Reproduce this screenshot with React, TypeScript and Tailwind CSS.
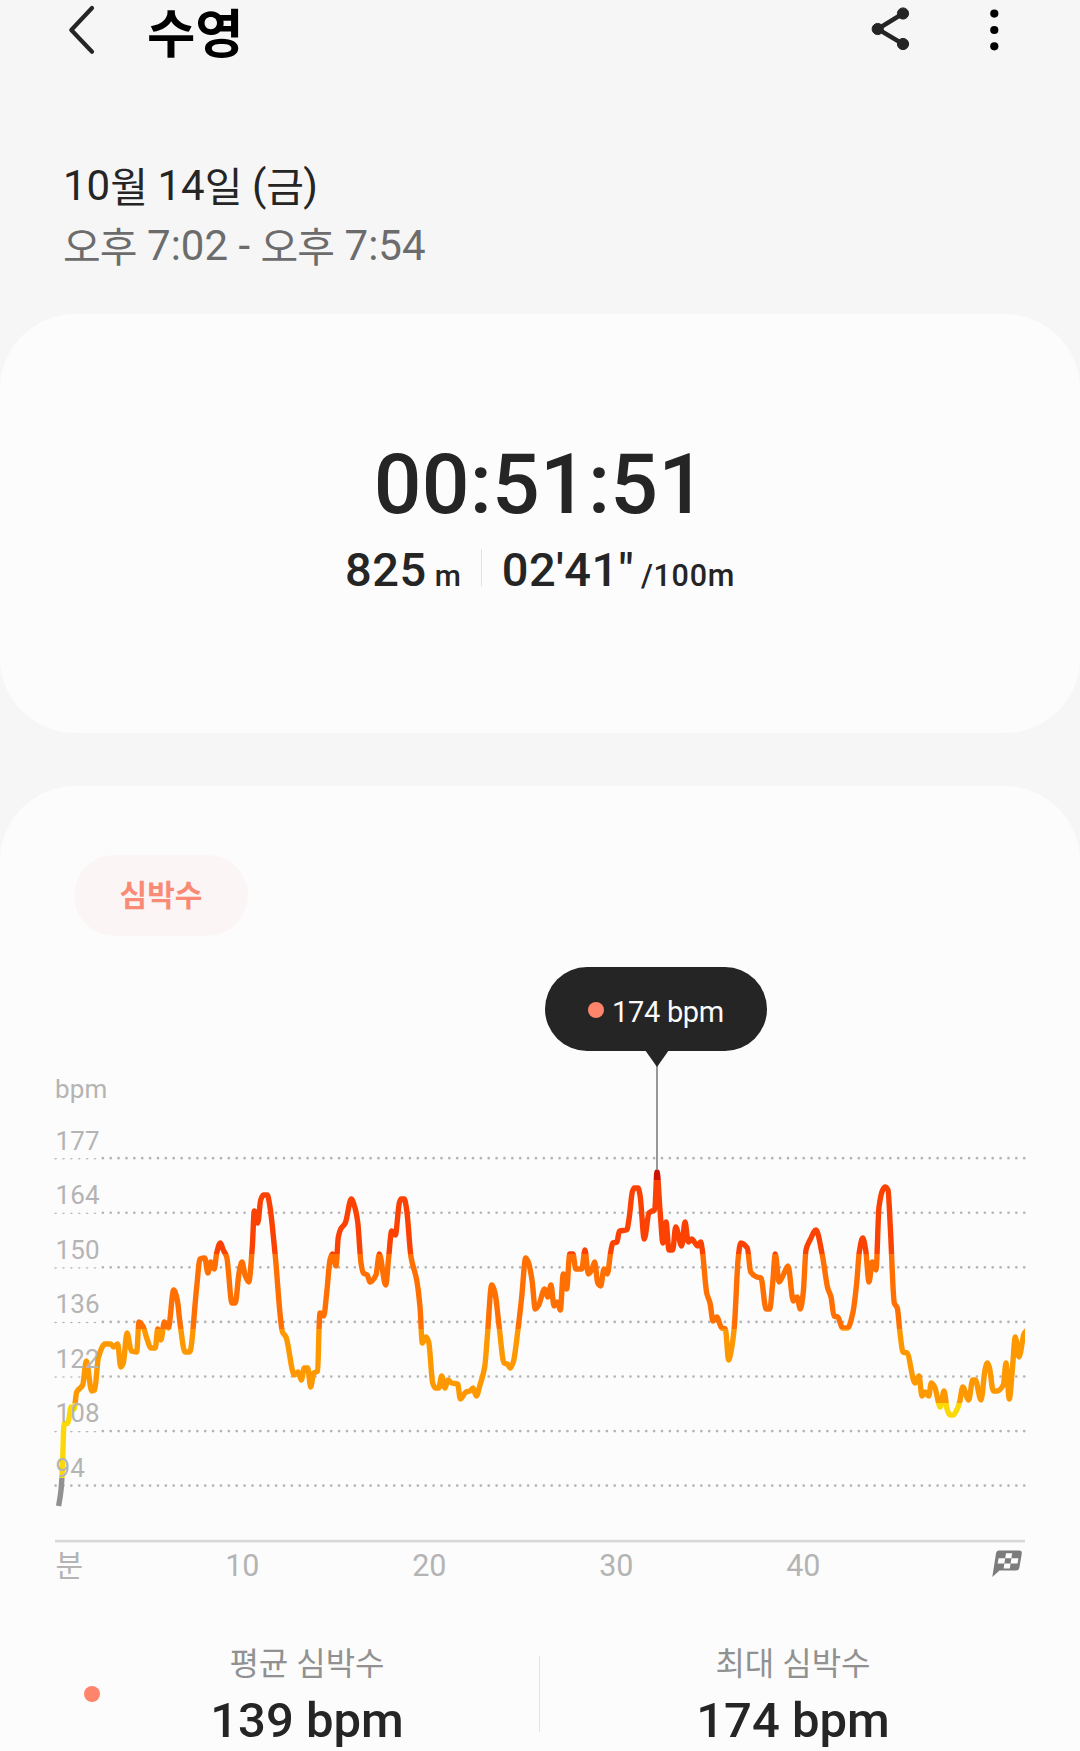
import React from 'react';

interface Zone {
  color: string;
  top: number;
  bottom: number;
}

interface StatProps {
  label: string;
  value: string;
}

const FONT = "font-[Roboto,'Noto_Sans_CJK_KR',sans-serif]";

// [x, y] samples of the heart rate line, y = 0 sits 18px above the 177 bpm grid line
const SAMPLES: [number, number][] = [
  [58.6, 366], [60.8, 352], [61.9, 338], [62.7, 320], [64, 284], [68, 283], [71, 267], [74, 269], [76.7, 252], [82.7, 245],
  [86.3, 221], [91.7, 251], [94.7, 250], [98.3, 218], [105, 204], [110.7, 204], [113.7, 207], [117.7, 204],
  [120.7, 227], [123.3, 223], [127, 193], [131.3, 211], [136.7, 212], [139, 182], [143.3, 187], [146.7, 198],
  [151, 208], [155.3, 208], [157.7, 189], [161, 200], [164.3, 182], [168.3, 188], [173.7, 150], [177.3, 160],
  [180, 183], [185, 212], [189.7, 212], [196.7, 147], [200, 119], [204.7, 118], [208, 133], [210.7, 122],
  [214.3, 129], [216.7, 113], [220.3, 103], [223.3, 110], [226.7, 117], [232, 163], [235.3, 163], [239, 133],
  [242, 122], [245, 135], [248.7, 142], [252.3, 107], [254.3, 71], [257.7, 83], [260.7, 60], [263.3, 55],
  [267.3, 55], [270, 67], [275, 113], [282.5, 192], [286, 197], [294.3, 235], [298.3, 232], [301.3, 240],
  [304.3, 228], [307.7, 228], [310.7, 247], [313.7, 233], [317.7, 231], [319, 190], [320, 173], [323.7, 176],
  [326.7, 153], [330, 120], [332.3, 114], [336, 126], [338.3, 97], [340.7, 89], [345.3, 83], [351.3, 59],
  [355, 68], [357.7, 82], [361, 123], [363.3, 133], [367.3, 135], [370, 142], [376, 135], [379.3, 114],
  [385.7, 145], [388.7, 117], [391.7, 91], [395.3, 95], [399.3, 63], [401, 59], [404.3, 59], [406.7, 70],
  [411, 117], [416.7, 140], [420, 167], [422.3, 203], [426, 197], [428.7, 202], [432.7, 243], [435.3, 248],
  [438.7, 248], [441.7, 236], [445, 248], [448, 240], [451.7, 243], [457.7, 244], [460.3, 259], [466, 252],
  [470, 251], [473, 248], [476.3, 256], [480, 245], [484.7, 227], [487.3, 197], [491.7, 145], [495, 153],
  [499.3, 188], [504, 223], [507.3, 224], [510.3, 228], [513.3, 222], [518.3, 187], [521.7, 157], [525.7, 118],
  [528.3, 122], [532, 140], [535.3, 169], [538.7, 165], [544.7, 149], [547.7, 157], [551, 145], [554, 166],
  [557.3, 162], [560.3, 170], [563.3, 134], [566.7, 149], [569.7, 114], [573, 114], [575.7, 129], [581.7, 129],
  [585, 110], [588.3, 134], [591.7, 130], [594.7, 122], [597.7, 143], [600.7, 146], [604, 129], [607.3, 134],
  [610.7, 112], [612.7, 103], [617, 102], [619.3, 91], [626.7, 90], [629.3, 77], [632.3, 52], [634.3, 48],
  [638, 48], [640, 55], [644.3, 99], [649, 73], [652, 71], [654.7, 70], [657, 32], [660, 70], [663, 103],
  [666, 82], [669, 110], [672.7, 110], [675.7, 87], [681.7, 106], [685, 82], [688.3, 102], [691.7, 99],
  [697.7, 106], [700.7, 102], [702.3, 110], [706.7, 153], [710, 163], [713, 181], [716.7, 177], [721.7, 188],
  [725.3, 189], [728.7, 220], [731.3, 210], [734.3, 187], [738.3, 117], [740.7, 103], [747.3, 108], [750.7, 132],
  [756.7, 137], [761, 138], [766, 169], [769.7, 169], [772.7, 143], [775.3, 114], [779, 142], [783.3, 135],
  [788, 126], [793.3, 161], [797, 157], [800.3, 169], [803.3, 152], [806, 110], [810, 100], [816, 90],
  [822.3, 115], [827.7, 148], [831, 157], [834, 176], [837.7, 177], [842.7, 188], [847.7, 188], [853, 172],
  [856.7, 143], [859.3, 112], [862.7, 98], [865.7, 110], [869, 142], [872.3, 122], [876, 130], [879, 67],
  [882.7, 50], [885, 47], [888, 50], [890.3, 87], [894.3, 163], [897.3, 168], [900, 193], [903, 212],
  [907, 213], [915, 243], [919, 236], [922, 256], [925, 252], [928.7, 256], [931.3, 243], [934.7, 247],
  [940.3, 267], [944, 251], [947.3, 270], [950, 275], [953.3, 275], [956.7, 270], [959.7, 262], [962.7, 247],
  [968.7, 260], [972.7, 240], [975.3, 240], [981, 260], [985, 230], [987.3, 223], [989.3, 227], [993.3, 251],
  [997.3, 251], [1003.3, 245], [1006, 223], [1009.3, 259], [1012.3, 230], [1015.3, 197], [1019, 217], [1024, 194],
  [1027, 190],
];

const ZONES: Zone[] = [
  { color: '#cc1205', top: 0, bottom: 39.7 },
  { color: '#fc4203', top: 39.7, bottom: 114 },
  { color: '#ff6f02', top: 114, bottom: 189 },
  { color: '#fe9800', top: 189, bottom: 263.3 },
  { color: '#fcd808', top: 263.3, bottom: 338 },
  { color: '#919191', top: 338, bottom: 400 },
];

const Y_LABELS = [177, 164, 150, 136, 122, 108, 94];
const X_LABELS = [10, 20, 30, 40];
const gridY = (i: number) => 18.2 + i * 54.57;

// monotone cubic curve, so peaks never overshoot their sample
function buildPath(points: [number, number][]) {
  const slopes = points.slice(1).map(([x, y], i) => (y - points[i][1]) / (x - points[i][0]));
  const tangents = points.map((_, i) => {
    if (i === 0) return slopes[0];
    if (i === points.length - 1) return slopes[i - 1];
    const a = slopes[i - 1];
    const b = slopes[i];
    return a * b <= 0 ? 0 : (2 * a * b) / (a + b);
  });

  return points.reduce((d, [x, y], i) => {
    if (i === 0) return `M${x} ${y}`;
    const [px, py] = points[i - 1];
    const third = (x - px) / 3;
    return `${d}C${px + third} ${py + tangents[i - 1] * third} ${x - third} ${y - tangents[i] * third} ${x} ${y}`;
  }, '');
}

function Header() {
  return (
    <header className="flex h-[58px] items-center pl-[66px] pr-[78px]">
      <svg className="h-[58px] w-[30px]" viewBox="0 0 30 58" fill="none" stroke="#252525" strokeWidth="4.2" strokeLinecap="round" strokeLinejoin="round">
        <path d="M26 8 5.3 30 26 51.7" />
      </svg>
      <h1 className="mt-[12px] ml-[51px] text-[52.5px] leading-[58px] font-bold text-black">수영</h1>
      <svg className="ml-auto h-[58px] w-[40px]" viewBox="0 0 40 58" fill="#252525" stroke="#252525">
        <path d="M33 13.5 7.7 29 33 44" fill="none" strokeWidth="4.4" />
        <circle cx="33" cy="13.5" r="5.6" />
        <circle cx="7.7" cy="29" r="5.6" />
        <circle cx="33" cy="44" r="5.6" />
      </svg>
      <svg className="ml-[76px] h-[58px] w-[16px]" viewBox="0 0 16 58" fill="#000">
        <circle cx="8.3" cy="13.6" r="4.1" />
        <circle cx="8.3" cy="30" r="4.1" />
        <circle cx="8.3" cy="46.3" r="4.1" />
      </svg>
    </header>
  );
}

// Hangul sits slightly lower and tighter than the digits around it
function Hangul({ children }: { children: React.ReactNode }) {
  return <span className="align-[-1.5px] text-[41px] leading-none tracking-[-0.9px]">{children}</span>;
}

function DateRange() {
  return (
    <div className="h-[256px] pt-[98px] pl-[63px] text-[42px] leading-[60px]">
      <div className="text-[#252525]">
        10<Hangul>월</Hangul> 14<Hangul>일</Hangul> (<Hangul>금</Hangul>)
      </div>
      <div className="text-[#6c6c6c]">
        <Hangul>오후</Hangul> 7:02 - <Hangul>오후</Hangul> 7:54
      </div>
    </div>
  );
}

function SummaryCard() {
  return (
    <section className="flex h-[419px] flex-col items-center rounded-[75px] bg-[#fcfcfc] pt-[127px] font-medium text-[#252525]">
      <div className="text-[84px] leading-[88px] tracking-[0.2px]">00:51:51</div>
      <div className="mt-[11px] flex h-[60px] items-baseline">
        <span className="text-[47px] leading-[60px] tracking-[0.5px]">825</span>
        <span className="ml-[8px] text-[30px]">m</span>
        <span className="mt-[-5px] ml-[20px] h-[37px] w-px self-center bg-[#e2e2e2]" />
        <span className="ml-[20px] text-[47px] leading-[60px] tracking-[0.4px]">02'41"</span>
        <span className="ml-[7px] text-[30.5px] tracking-[0.7px]">/100m</span>
      </div>
    </section>
  );
}

function HeartRateChart() {
  return (
    <div className="relative mt-[24px] h-[660px]">
      <svg className="block h-[660px] w-full" viewBox="0 -180 1080 660">
        <defs>
          <linearGradient id="zones" gradientUnits="userSpaceOnUse" x1="0" y1="0" x2="0" y2="400">
            {ZONES.map(zone => (
              <React.Fragment key={zone.color}>
                <stop offset={zone.top / 400} stopColor={zone.color} />
                <stop offset={zone.bottom / 400} stopColor={zone.color} />
              </React.Fragment>
            ))}
          </linearGradient>
          <clipPath id="plot">
            <rect x="55" y="0" width="970" height="400" />
          </clipPath>
        </defs>

        {Y_LABELS.map((label, i) => (
          <g key={label}>
            <line x1="55.6" x2="1025" y1={gridY(i)} y2={gridY(i)} stroke="#b4b4b4" strokeWidth="2.7" strokeLinecap="round" strokeDasharray="0 7.875" />
            {label > 100 && <rect x="53" y={gridY(i) - 10} width="45" height="10" fill="#fcfcfc" />}
          </g>
        ))}

        <path d={buildPath(SAMPLES)} clipPath="url(#plot)" fill="none" stroke="url(#zones)" strokeWidth="5.4" strokeLinejoin="round" />

        <g fill="#b4b4b4" fontSize="26">
          <text x="55" y="-42" letterSpacing="0.2">bpm</text>
          {Y_LABELS.map((label, i) => (
            <text key={label} x="55.4" y={gridY(i) - 8.7} letterSpacing="0.2">{label}</text>
          ))}
        </g>

        <rect x="55" y="399.8" width="970" height="2.6" fill="#d8d8d8" />
        <g fill="#b4b4b4" fontSize="30.5" textAnchor="middle">
          <text x="69.4" y="436" fontSize="30">분</text>
          {X_LABELS.map((label, i) => (
            <text key={label} x={242.3 + i * 187} y="436">{label}</text>
          ))}
        </g>

        <g transform="translate(992 410.6)">
          <path d="M7 0H27Q30.2 0 29.8 3L27.3 17.4Q26.8 20 24 20H7.5L0.3 26.4 4 3Q4.5 0 7 0Z" fill="#7c7c7c" />
          <path d="M14 2.6H20.2L19.4 7.6H13.2ZM6.6 7.6H13.2L12.4 12.8H5.6ZM19.4 7.6H26.4L25.6 12.8H18.6ZM12.4 12.8H18.6L17.8 17.8H11.6Z" fill="#fcfcfc" />
        </g>

        <line x1="657" x2="657" y1="-75" y2="30" stroke="#8c8c8c" strokeWidth="1.8" />
      </svg>

      <div className="absolute top-[7px] left-[545px] flex h-[84px] w-[222px] items-center rounded-full bg-[#252525] pl-[43px]">
        <span className="mt-[2px] size-4 rounded-full bg-[#ff846c]" />
        <span className="ml-[8px] mt-[6px] text-[29px] leading-9 tracking-[-0.3px] text-[#fafafa]">174 bpm</span>
        <svg className="absolute top-[83px] left-[100px] h-[17px] w-[24px]" viewBox="0 0 24 17" fill="#252525">
          <path d="M0 0H24L12 17Z" />
        </svg>
      </div>
    </div>
  );
}

function Stat({ label, value }: StatProps) {
  return (
    <div className="flex w-[240px] flex-col items-center">
      <div className="text-[32px] leading-[48px] text-[#919191]">{label}</div>
      <div className="mt-[5px] text-[49px] leading-[56px] font-medium whitespace-nowrap text-[#252525]">{value}</div>
    </div>
  );
}

function HeartRateCard() {
  return (
    <section className="mt-[53px] h-[965px] rounded-t-[75px] bg-[#fcfcfc] pt-[69px]">
      <div className="ml-[74px] flex h-[81px] w-[174px] items-center justify-center rounded-full bg-[#fcf5f5] text-[30px] font-bold text-[#f98b76]">
        심박수
      </div>
      <HeartRateChart />
      <div className="mt-[20px] flex pl-[84px]">
        <span className="mt-[46px] size-4 rounded-full bg-[#ff846c]" />
        <div className="ml-[87px]">
          <Stat label="평균 심박수" value="139 bpm" />
        </div>
        <span className="mt-[16px] ml-[112px] h-[76px] w-px bg-[#e4e4e4]" />
        <div className="ml-[133px]">
          <Stat label="최대 심박수" value="174 bpm" />
        </div>
      </div>
    </section>
  );
}

export default function App() {
  return (
    <div className={`h-[1751px] w-[1080px] overflow-hidden bg-[#f6f6f6] ${FONT}`}>
      <Header />
      <DateRange />
      <SummaryCard />
      <HeartRateCard />
    </div>
  );
}
